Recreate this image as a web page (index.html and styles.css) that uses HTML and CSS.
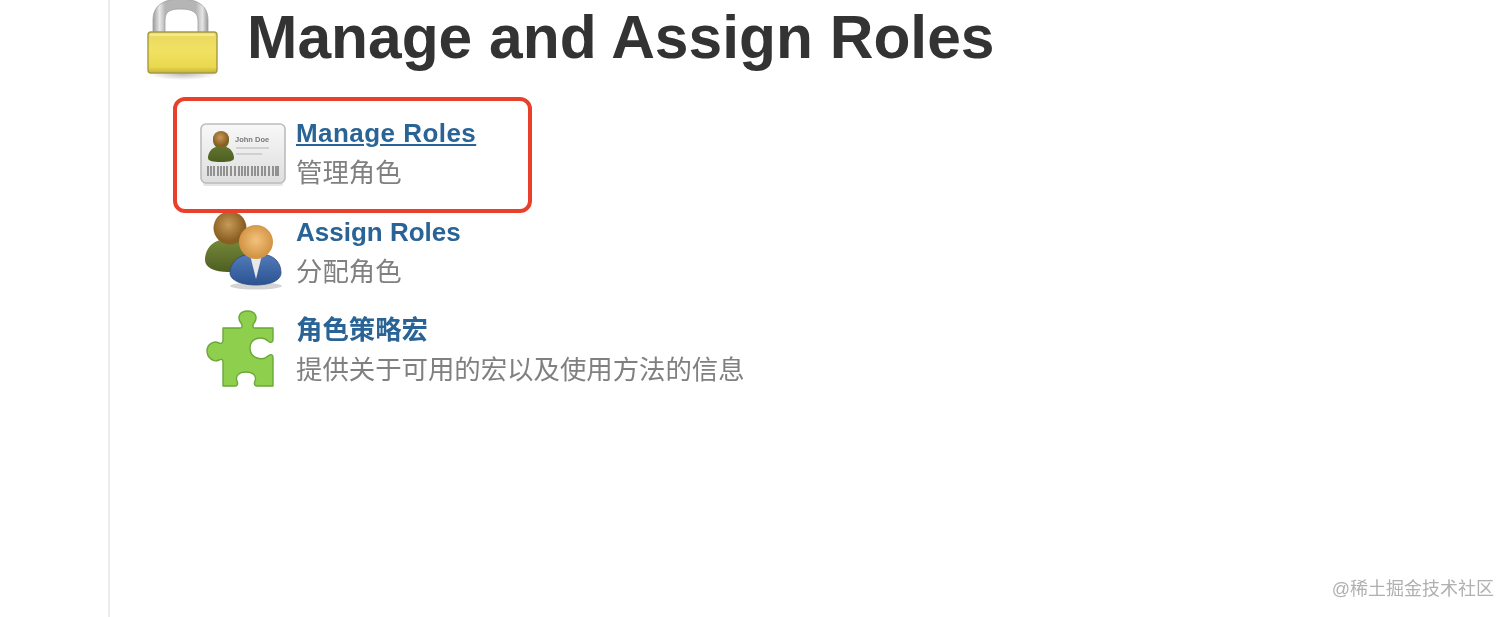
FILE: index.html
```html
<!DOCTYPE html>
<html lang="zh">
<head>
<meta charset="utf-8">
<title>Manage and Assign Roles</title>
<link rel="stylesheet" href="styles.css">
</head>
<body>
<main class="main">
  <header class="page-head">
    <svg class="lock" viewBox="0 0 76 80" width="76" height="80" aria-hidden="true">
      <defs>
        <linearGradient id="lockBody" x1="0" y1="0" x2="0" y2="1">
          <stop offset="0" stop-color="#e8d85e"/><stop offset=".45" stop-color="#f1e162"/><stop offset=".85" stop-color="#ead84e"/><stop offset="1" stop-color="#c4b440"/>
        </linearGradient>
        <linearGradient id="lockBar" x1="0" y1="0" x2="1" y2="0">
          <stop offset="0" stop-color="#9c9c9c"/><stop offset=".12" stop-color="#e8e8e8"/><stop offset=".22" stop-color="#b5b5b5"/><stop offset=".78" stop-color="#b5b5b5"/><stop offset=".9" stop-color="#e4e4e4"/><stop offset="1" stop-color="#979797"/>
        </linearGradient>
        <radialGradient id="lockShadow"><stop offset="0" stop-color="#888" stop-opacity=".55"/><stop offset="1" stop-color="#888" stop-opacity="0"/></radialGradient>
      </defs>
      <ellipse cx="37" cy="74" rx="35" ry="6" fill="url(#lockShadow)"/>
      <path d="M7 33V20C7 6 17-1 34.500-1S62 6 62 20v13H52V21c0-9-6-12-17.500-12S19 12 19 21v12z" fill="url(#lockBar)" stroke="#a0a0a0" stroke-width=".8"/>
      <rect x="2" y="32" width="69" height="41" rx="3" fill="url(#lockBody)" stroke="#a69a3e" stroke-width="1.400"/>
      <rect x="4" y="33.500" width="65" height="2.500" fill="#f5eda0" opacity=".8"/>
    </svg>
    <h1 class="title">Manage and Assign Roles</h1>
  </header>
  <ul class="items">
    <li class="item">
      <svg class="icon" viewBox="0 2 86 66" width="86" height="66" aria-hidden="true">
        <defs>
          <linearGradient id="card" x1="0" y1="0" x2="0" y2="1"><stop offset="0" stop-color="#f8f8f8"/><stop offset="1" stop-color="#dedede"/></linearGradient>
          <radialGradient id="headA" cx=".45" cy=".4"><stop offset="0" stop-color="#c89a58"/><stop offset="1" stop-color="#8a5f22"/></radialGradient>
          <radialGradient id="headB" cx=".5" cy=".45"><stop offset="0" stop-color="#f3c27e"/><stop offset="1" stop-color="#d29443"/></radialGradient>
          <linearGradient id="olive" x1="0" y1="0" x2="0" y2="1"><stop offset="0" stop-color="#76883a"/><stop offset="1" stop-color="#4d5f20"/></linearGradient>
          <linearGradient id="blue" x1="0" y1="0" x2="0" y2="1"><stop offset="0" stop-color="#5279b8"/><stop offset="1" stop-color="#2c5391"/></linearGradient>
        </defs>
        <rect x="3" y="64" width="80" height="4" rx="2" fill="#ccc" opacity=".5"/>
        <rect x="1" y="6" width="84" height="59" rx="5" fill="url(#card)" stroke="#bcbcbc" stroke-width="1.600"/>
        <path d="M8 40c0-6 4-10 8-11-2-2-3-4-3-7 0-5 3-8 8-8s8 3 8 8c0 3-1 5-3 7 4 1 8 5 8 11 0 3-5 4-13 4S8 43 8 40z" fill="url(#olive)"/>
        <circle cx="21" cy="21" r="8" fill="url(#headA)"/>
        <text class="card-name" x="35" y="24">John Doe</text>
        <rect x="36" y="29" width="33" height="2" fill="#d0d0d0"/>
        <rect x="36" y="35" width="26" height="2" fill="#d0d0d0"/>
        <path d="M8 48v10M11 48v10M14 48v10M18 48v10M21 48v10M24 48v10M27 48v10M31 48v10M35 48v10M39 48v10M42 48v10M45 48v10M48 48v10M52 48v10M55 48v10M58 48v10M62 48v10M65 48v10M69 48v10M73 48v10M76 48v10M78 48v10" stroke="#777" stroke-width="1.500"/>
      </svg>
      <div class="text">
        <a class="link link-active" href="#">Manage Roles</a>
        <p class="desc">管理角色</p>
      </div>
    </li>
    <li class="item">
      <svg class="icon" viewBox="0 0 86 80" width="86" height="80" aria-hidden="true">
        <ellipse cx="56" cy="74" rx="26" ry="3.500" fill="#aaa" opacity=".5"/>
        <path d="M5 48c0-11 7-18 15-20h20c6 2 10 9 10 20 0 8-9 12-22 12S5 56 5 48z" fill="url(#olive)"/>
        <circle cx="30" cy="16" r="16.500" fill="url(#headA)"/>
        <path d="M30 61c0-10 7-16 15-18h22c8 2 14 8 14 18 0 7-10 12-25 12S30 68 30 61z" fill="url(#blue)" stroke="#2a4a80" stroke-width=".8"/>
        <path d="M50 43h12l-6 24z" fill="#e8e8e8"/>
        <circle cx="56" cy="30" r="17" fill="url(#headB)"/>
      </svg>
      <div class="text">
        <a class="link" href="#">Assign Roles</a>
        <p class="desc">分配角色</p>
      </div>
    </li>
    <li class="item">
      <svg class="icon" viewBox="0 0 86 80" width="86" height="80" aria-hidden="true">
        <path d="M23 18H40C42 18 43 16 41 13 37 8 39 1 47.500 1 56 1 58 8 54 13 52 16 53 18 55 18H73V30C73 33 70 33 68 31 63 26 50 27 50 38 50 49 63 51 68 46 70 44 73 44 73 47V76H57C54 76 54 73 55 71 57 66 53 62 46 62 39 62 35 66 37 71 38 73 38 76 35 76H23V52C23 49 21 49 19 50 13 53 7 47 7 41 7 35 13 30 19 33 21 34 23 33 23 30Z" fill="#8ecf4e" stroke="#6aa838" stroke-width="1.400" stroke-linejoin="round"/>
      </svg>
      <div class="text">
        <a class="link link-cjk" href="#">角色策略宏</a>
        <p class="desc">提供关于可用的宏以及使用方法的信息</p>
      </div>
    </li>
  </ul>
</main>
<div class="highlight"></div>
<div class="watermark">@稀土掘金技术社区</div>
</body>
</html>
```
FILE: styles.css
```css
* { box-sizing: border-box; }
html, body { height: 100%; }
body {
  margin: 0;
  background: #fff;
  overflow: hidden;
  font-family: "Liberation Sans", "Noto Sans CJK SC", sans-serif;
  position: relative;
}
.main {
  margin-left: 108px;
  height: 617px;
  border-left: 2px solid #ececec;
  padding-left: 36px;
}
.page-head {
  display: flex;
  align-items: flex-start;
  height: 98px;
}
.lock { flex: none; margin-right: 25px; filter: blur(.5px); }
.title {
  margin: 3px 0 0;
  font-size: 60.5px;
  line-height: 68px;
  font-weight: 700;
  color: #333;
  white-space: nowrap;
  filter: blur(.3px);
}
.items {
  list-style: none;
  margin: 0;
  padding: 0 0 0 54px;
}
.item {
  display: flex;
  align-items: center;
  height: 98.5px;
  padding-top: 12px;
}
.icon { flex: none; margin-right: 10px; overflow: visible; filter: blur(.6px); }
.card-name { font-size: 7.5px; font-weight: 700; fill: #777; }
.text { display: flex; flex-direction: column; filter: blur(.3px); }
.link {
  font-size: 26px;
  line-height: 36px;
  font-weight: 700;
  color: #2a6496;
  text-decoration: none;
}
.link-active { text-decoration: underline; letter-spacing: .45px; }
.link-cjk { font-size: 26.4px; }
.desc {
  margin: 4px 0 0;
  font-size: 26.4px;
  line-height: 36px;
  color: #808080;
}
.highlight {
  position: absolute;
  left: 173px;
  top: 97px;
  width: 359px;
  height: 116px;
  border: 4.5px solid #e8402a;
  border-radius: 12px;
}
.watermark {
  position: absolute;
  right: 18px;
  top: 577px;
  font-size: 18px;
  line-height: 24px;
  color: #b0b0b0;
  filter: blur(.4px);
}
```
